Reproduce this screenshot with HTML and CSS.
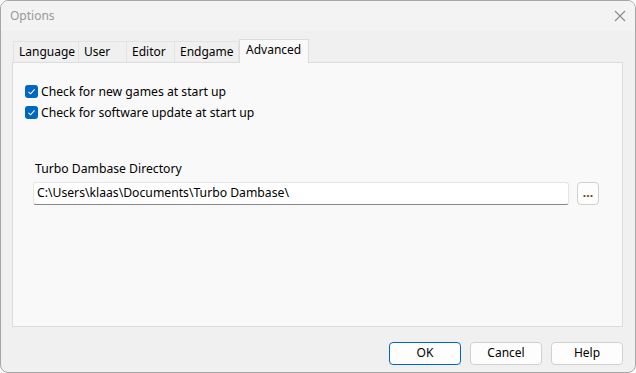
FILE: index.html
```html
<!DOCTYPE html>
<html lang="en">
<head>
    <meta charset="UTF-8">
    <title>Options</title>
    <link rel="stylesheet" href="styles.css">
</head>
<body>
    <div class="window">
        <div class="titlebar">
            <span class="title">Options</span>
            <span class="close">
                <svg width="12" height="12" viewBox="0 0 12 12"><path d="M1 1 L11 11 M11 1 L1 11" stroke="#8a8a8a" stroke-width="1.1" fill="none"/></svg>
            </span>
        </div>

        <div class="content">
            <div class="tabs">
                <div class="tab">Language</div>
                <div class="tab">User</div>
                <div class="tab">Editor</div>
                <div class="tab">Endgame</div>
                <div class="tab active">Advanced</div>
            </div>

            <div class="panel">
                <label class="check">
                    <span class="box"><svg width="9" height="9" viewBox="0 0 9 9"><path d="M1.5 4.8 L3.6 6.8 L7.6 2.4" stroke="#fff" stroke-width="1.1" fill="none"/></svg></span>
                    Check for new games at start up
                </label>
                <label class="check">
                    <span class="box"><svg width="9" height="9" viewBox="0 0 9 9"><path d="M1.5 4.8 L3.6 6.8 L7.6 2.4" stroke="#fff" stroke-width="1.1" fill="none"/></svg></span>
                    Check for software update at start up
                </label>

                <div class="dir-label">Turbo Dambase Directory</div>
                <div class="dir-row">
                    <div class="input">C:\Users\klaas\Documents\Turbo Dambase\</div>
                    <div class="browse">...</div>
                </div>
            </div>

            <div class="buttons">
                <div class="btn default">OK</div>
                <div class="btn">Cancel</div>
                <div class="btn">Help</div>
            </div>
        </div>
    </div>
</body>
</html>
```

FILE: styles.css
```css
* {
    margin: 0;
    padding: 0;
    box-sizing: border-box;
}

body {
    background: #ffffff;
    font-family: 'Noto Sans', 'Liberation Sans', sans-serif;
    font-size: 12px;
    color: #000;
}

.window {
    width: 636px;
    height: 373px;
    border: 1px solid #a6a6a6;
    border-radius: 8px;
    overflow: hidden;
    display: flex;
    flex-direction: column;
    background: #f0f0f0;
}

.titlebar {
    height: 30px;
    background: #f3f3f3;
    display: flex;
    align-items: center;
    justify-content: space-between;
    padding: 0 9px 2px 9px;
}

.title {
    color: #999;
}

.close {
    display: flex;
    margin-top: 1px;
}

.content {
    flex: 1;
    display: flex;
    flex-direction: column;
    padding: 8px 12px 0 11px;
}

.tabs {
    display: flex;
    align-items: flex-end;
    height: 23px;
    padding-left: 1px;
    position: relative;
    z-index: 1;
}

.tab {
    height: 21px;
    padding: 0 5px;
    border: 1px solid #e3e3e3;
    border-bottom: none;
    border-left: none;
    background: #f0f0f0;
    line-height: 20px;
    white-space: nowrap;
}

.tab:first-child {
    border-left: 1px solid #e3e3e3;
}

.tab:nth-child(1) { width: 66px; }
.tab:nth-child(2) { width: 48px; }
.tab:nth-child(3) { width: 48px; }
.tab:nth-child(4) { width: 64px; }

.tab.active {
    height: 24px;
    width: 70px;
    margin-bottom: -1px;
    padding: 0 6px;
    background: #f9f9f9;
    border: 1px solid #dcdcdc;
    border-bottom: none;
    line-height: 20px;
}

.panel {
    height: 265px;
    background: #f9f9f9;
    border: 1px solid #dcdcdc;
    padding: 22px 0 0 12px;
    font-size: 12.2px;
}

.check {
    display: flex;
    align-items: center;
    height: 13px;
    gap: 3px;
    margin-bottom: 8px;
    white-space: nowrap;
}

.box {
    width: 13px;
    height: 13px;
    border-radius: 3px;
    background: #0067c0;
    display: flex;
    align-items: center;
    justify-content: center;
}

.dir-label {
    margin: 41px 0 0 10px;
    height: 16px;
}

.dir-row {
    display: flex;
    align-items: center;
    gap: 8px;
    margin: 6px 0 0 8px;
}

.input {
    width: 536px;
    height: 23px;
    background: #fff;
    border: 1px solid #e5e5e5;
    border-bottom: 1px solid #868686;
    border-radius: 3px;
    padding: 0 0 0 3px;
    line-height: 20px;
}

.browse {
    width: 22px;
    height: 23px;
    border: 1px solid #d0d0d0;
    border-radius: 4px;
    background: #fdfdfd;
    text-align: center;
    line-height: 20px;
    font-weight: bold;
    color: #704010;
}

.buttons {
    display: flex;
    justify-content: flex-end;
    gap: 9px;
    margin-top: 15px;
}

.btn {
    width: 72px;
    height: 23px;
    border: 1px solid #d0d0d0;
    border-radius: 4px;
    background: #fdfdfd;
    text-align: center;
    line-height: 20px;
}

.btn.default {
    border-color: #0067c0;
}
```
